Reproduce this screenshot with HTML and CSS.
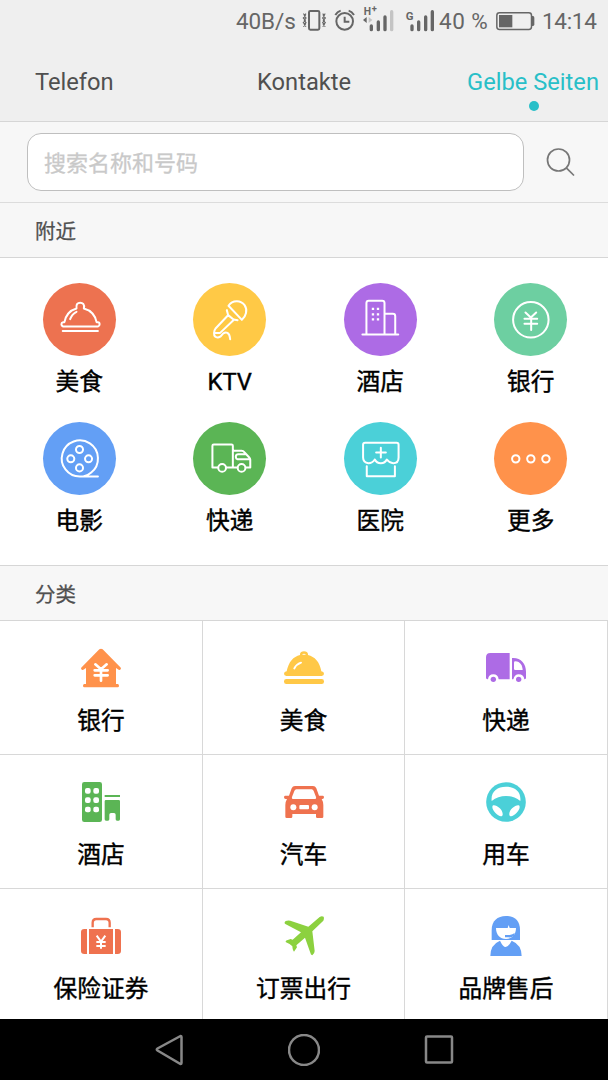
FILE: index.html
```html
<!DOCTYPE html>
<html lang="zh-CN">
<head>
<meta charset="utf-8">
<title>Gelbe Seiten</title>
<link rel="stylesheet" href="styles.css">
</head>
<body>
<div class="screen">
  <header class="top">
    <div class="status">
      <span class="speed">40B/s</span>
      <svg class="status-icons" viewBox="246 0 402 126" fill="none" stroke="#666" stroke-width="4">
        <rect x="267" y="33" width="31" height="56" rx="4" stroke-width="6"/>
        <path d="M250 41l6 6-6 7 6 7-6 7 6 6-6 6M258 41l-5 6 5 7-5 7 5 7-5 6 5 6M308 41l5 6-5 7 5 7-5 7 5 6-5 6M316 41l-6 6 6 7-6 7 6 7-6 6 6 6" stroke-width="3.500"/>
        <circle cx="374" cy="64" r="25" stroke-width="6"/>
        <path d="M374 50v15h14" stroke-width="6"/>
        <path d="M346 45q6-10 16-13M402 45q-6-10-16-13" stroke-width="6"/>
        <path d="M454 78v11M475 66v23M495 51v38" class="bars"/>
        <path d="M515 35v54" stroke="#c4c4c4" class="bars"/>
        <path d="M576 78v11M596 66v23M617 51v38M637 35v54" class="bars"/>
        <path d="M440 51v18l-11-9z" fill="#666" stroke="none"/>
        <path d="M446 51v18l11-9z" fill="#c4c4c4" stroke="none"/>
        <text x="431" y="45" class="net">H</text>
        <text x="455" y="37" class="net plus">+</text>
        <text x="557" y="60" class="net gsm">G</text>
      </svg>
      <span class="percent">40 %</span>
      <svg class="battery" viewBox="829 30 117 66">
        <rect x="831.500" y="38.500" width="104" height="50" rx="8" fill="none" stroke="#666" stroke-width="4.500"/>
        <rect x="838" y="45" width="40" height="37" fill="#666"/>
        <path d="M937 48h3q4 0 4 5v20q0 5-4 5h-3z" fill="#666"/>
      </svg>
      <span class="clock">14:14</span>
    </div>
    <nav class="tabs">
      <span class="tab">Telefon</span>
      <span class="tab">Kontakte</span>
      <span class="tab active">Gelbe Seiten</span>
    </nav>
  </header>

  <div class="search">
    <div class="search-box">搜索名称和号码</div>
    <svg class="search-icon" viewBox="0 0 30 30" fill="none" stroke="#777" stroke-width="1.700"><circle cx="12.500" cy="13" r="11"/><path d="M20.300 20.800L28 28.500"/></svg>
  </div>

  <h2 class="section">附近</h2>
  <div class="nearby">
    <div class="spot">
      <svg class="disc red" viewBox="129 40 218 218">
        <path d="M193 157h-4q-5 1-5 6t5 7h104q5-1 5-7t-5-6h-4C285 136 273 122 251 116C254 103 247 99 240 99S227 103 229 116C208 122 197 136 193 157zM188 183h105M210 148q5-15 19-22"/>
      </svg>
      <span>美食</span>
    </div>
    <div class="spot">
      <svg class="disc yellow" viewBox="580 40 218 218">
        <path d="M686 108C699 88 724 92 734 106S738 140 726 150zM681 121l4 15 16 13 12 2M684 137L648 175C641 184 642 196 646 200S659 203 663 199C669 190 676 185 683 189S690 199 691 208M703 149L661 189H647"/>
      </svg>
      <span>KTV</span>
    </div>
    <div class="spot">
      <svg class="disc purple" viewBox="119 40 218 218">
        <path d="M174 194h107M186 192V100q0-7 7-7h40q7 0 7 7v92M242 132h23q7 0 7 7v53"/>
        <path class="solid" d="M202 114h7v7h-7zM217 114h7v7h-7zM202 130h7v7h-7zM217 130h7v7h-7zM202 145h7v7h-7zM217 145h7v7h-7z"/>
      </svg>
      <span>酒店</span>
    </div>
    <div class="spot">
      <svg class="disc mint" viewBox="570 40 218 218">
        <circle cx="680" cy="150" r="53"/><path d="M664 128l16 15 16-15M661 147h38M661 162h38M681 144v36"/>
      </svg>
      <span>银行</span>
    </div>
    <div class="spot">
      <svg class="disc blue" viewBox="129 36 218 218">
        <path d="M293 199H240A54 54 0 1 1 273 187Q262 197 249 199"/>
        <circle cx="238" cy="118" r="10.500"/><circle cx="212" cy="146" r="10.500"/><circle cx="265" cy="146" r="10.500"/><circle cx="238" cy="173" r="10.500"/>
      </svg>
      <span>电影</span>
    </div>
    <div class="spot">
      <svg class="disc green" viewBox="580 36 218 218">
        <path d="M655 172H638V107q0-4 4-4h53q4 0 4 4v65H679M702 122h23q5 0 9 5l14 15q3 3 3 7v23h-13M712 172h-10M747 147h-34q-5-1-5-6v-3q1-6 7-6h20"/>
        <circle cx="667" cy="173" r="11.500"/><circle cx="725" cy="173" r="11.500"/>
      </svg>
      <span>快递</span>
    </div>
    <div class="spot">
      <svg class="disc cyan" viewBox="119 36 218 218">
        <path d="M182 98h94q6 0 6 6v38C282 153 275 159 266 159Q255 159 247 148Q242 159 229 159T211 148Q204 159 192 159C183 158 176 153 176 142V104q0-6 6-6zM187 168v30h84v-30M215 127h29M229 113v29"/>
      </svg>
      <span>医院</span>
    </div>
    <div class="spot">
      <svg class="disc orange" viewBox="570 36 218 218">
        <circle cx="635" cy="146" r="11"/><circle cx="680" cy="146" r="11"/><circle cx="725" cy="146" r="11"/>
      </svg>
      <span>更多</span>
    </div>
  </div>

  <h2 class="section second">分类</h2>
  <div class="categories">
    <div class="cell">
      <svg class="icon" viewBox="243 264 120 120" fill="#ff924b">
        <path d="M298 268q5-3 10 0l53 54q3 3 1 6-3 3-6 1l-8-5v48h5q4 0 4 5t-4 5h-100q-4 0-4-5t4-5h5v-48l-8 5q-3 2-6-1-2-3 1-6z"/>
        <path d="M286 313l17 15 17-15M284 331h39M284 346h39M303 328v34" fill="none" stroke="#fff" stroke-width="8" stroke-linecap="round"/>
      </svg>
      <span>银行</span>
    </div>
    <div class="cell">
      <svg class="icon" viewBox="851 264 120 120" fill="#ffc847">
        <path d="M859 334C865 305 879 290 899 285C898 277 904 274 911 274S924 277 923 285C943 290 958 305 963 334q8 1 8 7t-7 7h-106q-7-1-7-7t8-7z"/>
        <rect x="851" y="357" width="120" height="15" rx="7"/>
        <path d="M882 325q6-12 20-17" fill="none" stroke="#fff" stroke-width="6" stroke-linecap="round"/>
        <path d="M905 284q6-6 12 0z" fill="#fff"/>
      </svg>
      <span>美食</span>
    </div>
    <div class="cell">
      <svg class="icon" viewBox="547 144 120 120" fill="#ad6be5">
        <path d="M560 159h58v79h-33q-2-15-16-15t-16 15q-6 0-6-5v-61q0-13 13-13zM625 174C651 172 667 190 667 216v17q0 5-5 5-2-15-17-15-12 0-16 15h-4z"/>
        <circle cx="569" cy="238" r="8"/><circle cx="645" cy="238" r="8"/>
        <path d="M635 184C650 185 656 196 657 210h-22q-4 0-4-4v-18q0-4 4-4z" fill="#fff"/>
      </svg>
      <span>快递</span>
    </div>
    <div class="cell">
      <svg class="icon" viewBox="243 96 120 120" fill="#5bb555">
        <rect x="246" y="96" width="60" height="120" rx="7"/>
        <path d="M314 135h46v6h-46zM317 150h39q4 0 4 4v54q0 4-4 4h-5q-4 0-4-4v-14q0-5-5-5h-9q-5 0-5 5v14q0 4-4 4h-6q-4 0-4-4v-54q0-4 4-4z"/>
        <g fill="#fff"><rect x="255" y="114" width="17" height="17" rx="6"/><rect x="280" y="114" width="17" height="17" rx="6"/><rect x="255" y="142" width="17" height="17" rx="6"/><rect x="280" y="142" width="17" height="17" rx="6"/><rect x="255" y="170" width="17" height="17" rx="6"/><rect x="280" y="170" width="17" height="17" rx="6"/></g>
      </svg>
      <span>酒店</span>
    </div>
    <div class="cell">
      <svg class="icon" viewBox="851 96 120 120" fill="#ef724f">
        <path d="M884 108h54q7 0 10 7l8 22h12q3 0 3 5t-5 5h-2q5 8 5 18v35q0 4-4 4h-14q-4 0-4-4v-8h-71v8q0 4-4 4h-13q-4 0-4-4v-35q0-10 5-18h-4q-5 0-5-5t3-5h12l8-22q3-7 10-7z"/>
        <path d="M888 118h46q4 0 6 5l7 18q2 6-5 6h-62q-7 0-5-6l7-18q2-5 6-5z" fill="#fff"/>
        <g fill="#fff"><circle cx="879" cy="172" r="9"/><circle cx="943" cy="172" r="9"/><rect x="897" y="165" width="29" height="13" rx="3"/></g>
      </svg>
      <span>汽车</span>
    </div>
    <div class="cell">
      <svg class="icon" viewBox="547 546 120 120">
        <circle cx="607" cy="606" r="59.500" fill="#4bd0d8"/>
        <path d="M564 603C561 575 580 560 607 560S653 575 650 603Q631 588 607 588T564 603zM569 616C579 614 599 630 597 644C594 658 566 636 566 621Q566 617 569 616zM645 616C635 614 615 630 617 644C620 658 648 636 648 621Q648 617 645 616z" fill="#fff"/>
      </svg>
      <span>用车</span>
    </div>
    <div class="cell">
      <svg class="icon" viewBox="243 93 120 120" fill="#ef724f">
        <path d="M253 132h8v75h-8q-10 0-10-9v-57q0-9 10-9zM267 132h72v75h-72zM345 132h8q10 0 10 9v57q0 9-10 9h-8z"/>
        <path d="M278 127v-14q0-11 11-11h29q11 0 11 11v14" fill="none" stroke="#ef724f" stroke-width="7"/>
        <path d="M290 152l13 18 13-18M289 171h28M289 183h28M303 169v22" fill="none" stroke="#fff" stroke-width="6"/>
      </svg>
      <span>保险证券</span>
    </div>
    <div class="cell">
      <svg class="icon" viewBox="851 93 120 120" fill="#8cd13f">
        <path d="M958 96Q964 92 970 95Q972 101 969 107L936 139L943 198Q943 206 936 211Q931 210 930 203L914 158L888 181L890 187L881 200Q877 197 876 184Q869 177 857 172Q854 168 860 166L871 162L877 164L902 142L855 117Q850 113 856 108Q863 105 870 107L924 125z"/>
      </svg>
      <span>订票出行</span>
    </div>
    <div class="cell">
      <svg class="icon" viewBox="247 93 120 120" fill="#639ff5">
        <path d="M264 165V135C264 108 281 93 307 93S349 108 349 135v30z"/>
        <path d="M277 129h35l3-9 3 9h19C337 149 325 162 307 162S277 149 277 129zM288 165h38l-5 5h-28z" fill="#fff"/>
        <path d="M304 150h14q9-1 15-6l-2 8q-8 7-17 5h-10zM289 167q9 19 17 19t18-19q30 12 30 46h-94q0-34 29-46z"/>
      </svg>
      <span>品牌售后</span>
    </div>
  </div>

  <footer class="navbar">
    <svg viewBox="0 0 32 32"><path d="M27.500 2L4.500 14.500q-1.500 1 0 2l23 13.500q1 0 1-1V3q0-1-1-1z"/></svg>
    <svg viewBox="0 0 32 32"><circle cx="16" cy="16" r="15"/></svg>
    <svg viewBox="0 0 32 32"><rect x="3" y="2.500" width="26" height="26" rx="1"/></svg>
  </footer>
</div>
</body>
</html>
```

FILE: styles.css
```css
* { box-sizing: border-box; }

body {
  margin: 0;
  background: #fff;
  color: #000;
  font-family: Roboto, "Noto Sans CJK SC", sans-serif;
}

svg { display: block; flex: none; }

.screen {
  width: 608px;
  height: 1080px;
  display: flex;
  flex-direction: column;
  overflow: hidden;
}

.top {
  height: 122px;
  background: #efefef;
  border-bottom: 1px solid #d6d6d6;
}

.status {
  height: 42px;
  display: flex;
  align-items: center;
  padding-left: 236px;
  color: #666;
  font-size: 22.5px;
  white-space: nowrap;
}
.speed { width: 66px; letter-spacing: -0.1px; }
.status-icons { width: 134px; height: 42px; }
.bars { stroke-width: 10; stroke-linecap: round; }
.net { font: bold 31px Roboto, sans-serif; fill: #666; stroke: none; }
.plus { font-size: 28px; }
.gsm { font-size: 34px; }
.percent { width: 60px; padding-left: 3px; letter-spacing: 0.5px; }
.battery { width: 39px; height: 22px; }
.clock { padding-left: 7px; letter-spacing: -0.3px; }

.tabs {
  height: 80px;
  display: grid;
  grid-template-columns: 222px 210px auto;
  justify-content: start;
  align-items: center;
  padding-left: 35px;
  color: #505050;
  font-size: 23.7px;
  white-space: nowrap;
}
.tab { position: relative; }
.active { color: #29bfc8; }
.active::after {
  content: "";
  position: absolute;
  left: 62px;
  top: 33px;
  width: 10px;
  height: 10px;
  border-radius: 50%;
  background: #29bfc8;
}

.search {
  height: 81px;
  display: flex;
  align-items: center;
  gap: 22px;
  padding-left: 27px;
  background: #f7f7f7;
  border-bottom: 1px solid #dcdcdc;
}
.search-box {
  width: 497px;
  height: 58px;
  padding-left: 16px;
  border: 1px solid #bfbfbf;
  border-radius: 14px;
  background: #fff;
  color: #c9c9c9;
  font-size: 22px;
  line-height: 60px;
  -webkit-text-stroke: 0.3px;
}
.search-icon { width: 30px; height: 30px; }

.section {
  height: 55px;
  margin: 0;
  padding-left: 35px;
  background: #f7f7f7;
  border-bottom: 1px solid #d6d6d6;
  color: #505050;
  font-size: 20.5px;
  font-weight: 400;
  line-height: 58px;
  -webkit-text-stroke: 0.25px;
}
.second { height: 56px; border-top: 1px solid #d6d6d6; }

.nearby {
  height: 307px;
  display: grid;
  grid-template-columns: repeat(4, 1fr);
  grid-auto-rows: 138.5px;
  padding: 25px 2px 0 4px;
}
.spot, .cell {
  display: flex;
  flex-direction: column;
  align-items: center;
  font-size: 23.7px;
  line-height: 36px;
}
.spot span, .cell span { -webkit-text-stroke: 0.4px; }
.spot { gap: 9px; }
.spot span { line-height: 35px; }

.disc {
  width: 73px;
  height: 73px;
  border-radius: 50%;
  fill: none;
  stroke: #fff;
  stroke-width: 6;
  stroke-linecap: round;
  stroke-linejoin: round;
}
.solid { fill: #fff; stroke: none; }
.red { background: #ed7250; }
.yellow { background: #ffc946; }
.purple { background: #ad6be5; }
.mint { background: #6dcfa1; }
.blue { background: #639ff5; }
.green { background: #5bb555; }
.cyan { background: #4bd0d8; }
.orange { background: #ff924b; }

.categories {
  height: 398px;
  display: grid;
  grid-template-columns: 203px 202px 203px;
  grid-auto-rows: 134px;
  overflow: hidden;
}
.cell {
  gap: 15px;
  padding-top: 27px;
  border-right: 1px solid #d8d8d8;
  border-bottom: 1px solid #d8d8d8;
}
.icon { width: 40px; height: 40px; }

.navbar {
  height: 61px;
  display: flex;
  align-items: center;
  justify-content: center;
  gap: 103px;
  background: #000;
}
.navbar svg {
  width: 32px;
  height: 32px;
  fill: none;
  stroke: #888;
  stroke-width: 2.5;
}
```
